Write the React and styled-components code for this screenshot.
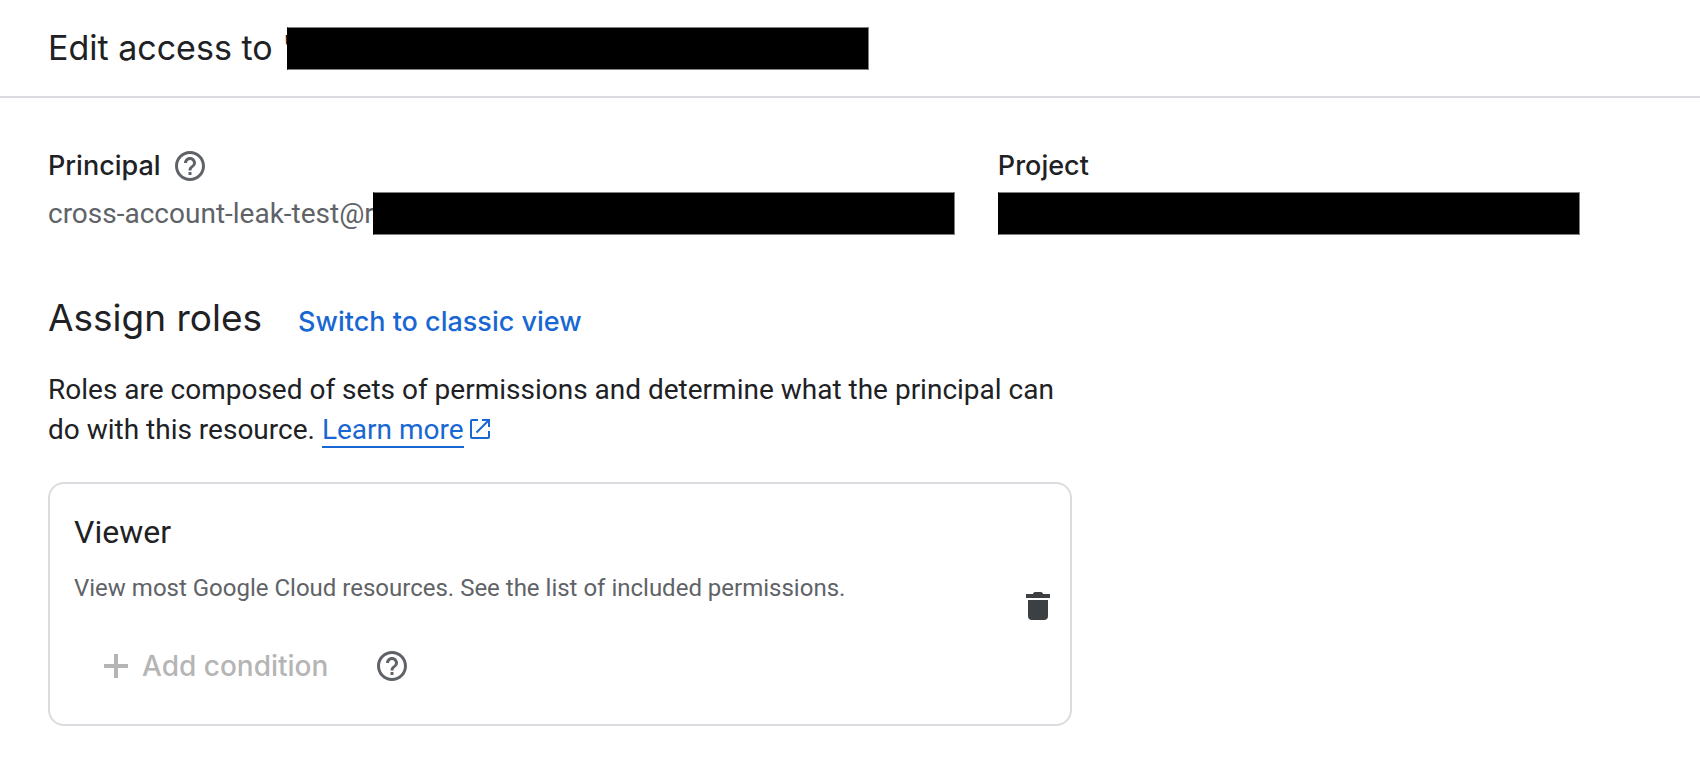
import React from 'react';
import styled, { createGlobalStyle } from 'styled-components';

const GlobalStyle = createGlobalStyle`
  * {
    box-sizing: border-box;
  }
  body {
    margin: 0;
    background: #fff;
    color: #202124;
    font-family: Roboto, sans-serif;
    font-size: 28px;
    line-height: 40px;
  }
`;

const HelpIcon = () => (
  <svg width="36" height="36" viewBox="0 0 24 24" fill="currentColor" aria-hidden="true">
    <path d="M11 18h2v-2h-2v2zm1-16C6.48 2 2 6.48 2 12s4.48 10 10 10 10-4.48 10-10S17.52 2 12 2zm0 18c-4.41 0-8-3.59-8-8s3.59-8 8-8 8 3.59 8 8-3.59 8-8 8zm0-14c-2.21 0-4 1.79-4 4h2c0-1.1.9-2 2-2s2 .9 2 2c0 2-3 1.75-3 5h2c0-2.25 3-2.5 3-5 0-2.21-1.79-4-4-4z" />
  </svg>
);

const PlusIcon = () => (
  <svg width="36" height="36" viewBox="0 0 36 36" fill="currentColor" aria-hidden="true">
    <path d="M16 6h4v10h10v4H20v10h-4V20H6v-4h10z" />
  </svg>
);

const TrashIcon = () => (
  <svg width="36" height="36" viewBox="0 0 36 36" fill="currentColor" aria-hidden="true">
    <path d="M8 14h20v16a4 4 0 0 1-4 4H12a4 4 0 0 1-4-4zM6 8h7c0-1 1-2 2-2h6c1 0 2 1 2 2h7v4H6z" />
  </svg>
);

const ExternalIcon = () => (
  <svg width="20" height="20" viewBox="0 0 20 20" fill="none" stroke="currentColor" strokeWidth="2" aria-hidden="true">
    <path d="M8 1H2a1 1 0 0 0-1 1v16a1 1 0 0 0 1 1h16a1 1 0 0 0 1-1v-6M12 1h7v7M19 1L6.500 13.500" />
  </svg>
);

const App = () => {
  return (
    <Panel>
      <GlobalStyle />
      <Header>
        <Title>Edit access to '</Title>
        <Redacted $overlap={5} />
      </Header>
      <Content>
        <Fields>
          <Field>
            <FieldLabel>
              Principal
              <IconButton type="button" aria-label="About principals">
                <HelpIcon />
              </IconButton>
            </FieldLabel>
            <FieldValue>
              cross-account-leak-test@r
              <Redacted $overlap={1} />
            </FieldValue>
          </Field>
          <Field>
            <FieldLabel>Project</FieldLabel>
            <FieldValue>
              v
              <Redacted $overlap={13} />
            </FieldValue>
          </Field>
        </Fields>
        <Roles>
          <RolesHeader>
            <RolesTitle>Assign roles</RolesTitle>
            <TextButton type="button">Switch to classic view</TextButton>
          </RolesHeader>
          <Description>
            Roles are composed of sets of permissions and determine what the principal can do with
            this resource.{' '}
            <LearnMore href="#learn-more">
              <span>Learn more</span>
              <ExternalIcon />
            </LearnMore>
          </Description>
          <Card>
            <CardInfo>
              <RoleName>Viewer</RoleName>
              <RoleText>View most Google Cloud resources. See the list of included permissions.</RoleText>
              <CardActions>
                <AddButton type="button" disabled>
                  <PlusIcon />
                  Add condition
                </AddButton>
                <IconButton type="button" aria-label="About conditions">
                  <HelpIcon />
                </IconButton>
              </CardActions>
            </CardInfo>
            <IconButton type="button" aria-label="Delete role" $dark>
              <TrashIcon />
            </IconButton>
          </Card>
        </Roles>
      </Content>
    </Panel>
  );
};

export default App;

const Panel = styled.main`
  width: 100%;
`;

const Header = styled.header`
  display: flex;
  align-items: center;
  padding: 0 48px;
  border-bottom: 2px solid #dadce0;
`;

const Title = styled.h1`
  margin: 0;
  font-family: Inter, sans-serif;
  font-size: 34px;
  font-weight: 400;
  line-height: 96px;
  white-space: nowrap;
`;

const Redacted = styled.span`
  flex: none;
  position: relative;
  width: 582px;
  height: 43px;
  margin-left: ${(props) => (props.$overlap ? -props.$overlap : 0)}px;
  background: #000;
  border: 1px solid #808080;
  border-left-color: #000;
`;

const Content = styled.div`
  padding: 50px 48px 38px;
`;

const Fields = styled.div`
  display: flex;
  gap: 43px;
`;

const Field = styled.div`
  display: flex;
  flex-direction: column;
  gap: 8px;
`;

const FieldLabel = styled.div`
  display: flex;
  align-items: center;
  gap: 11px;
  height: 36px;
  font-family: Inter, sans-serif;
  font-size: 27px;
  font-weight: 500;
`;

const FieldValue = styled.div`
  display: flex;
  align-items: center;
  color: #5f6368;
  white-space: nowrap;
`;

const IconButton = styled.button`
  display: flex;
  padding: 0;
  border: 0;
  background: none;
  color: ${(props) => (props.$dark ? '#3c4043' : '#5f6368')};
  cursor: pointer;
`;

const Roles = styled.section`
  max-width: 1024px;
  margin-top: 58px;
`;

const RolesHeader = styled.div`
  display: flex;
  align-items: baseline;
  gap: 36px;
`;

const RolesTitle = styled.h2`
  margin: 0;
  font-family: Inter, sans-serif;
  font-size: 37px;
  font-weight: 400;
  line-height: 50px;
`;

const TextButton = styled.button`
  padding: 0;
  border: 0;
  background: none;
  color: #1967d2;
  font-family: Inter, sans-serif;
  font-size: 27px;
  font-weight: 500;
  line-height: 36px;
  cursor: pointer;
`;

const Description = styled.p`
  margin: 27px 0 32px;
`;

const LearnMore = styled.a`
  color: #1967d2;
  text-decoration: none;
  white-space: nowrap;

  span {
    border-bottom: 2px solid #1967d2;
  }
  svg {
    margin-left: 6px;
  }
`;

const Card = styled.article`
  display: flex;
  align-items: center;
  justify-content: space-between;
  padding: 0 14px 0 24px;
  border: 2px solid #dadce0;
  border-radius: 16px;
`;

const CardInfo = styled.div`
  padding: 28px 0 40px;
`;

const RoleName = styled.h3`
  margin: 0;
  font-size: 32px;
  font-weight: 400;
  line-height: 40px;
`;

const RoleText = styled.p`
  margin: 20px 0 44px;
  color: #5f6368;
  font-size: 24px;
  line-height: 32px;
`;

const CardActions = styled.div`
  display: flex;
  align-items: center;
  gap: 22px;
`;

const AddButton = styled(TextButton)`
  display: flex;
  align-items: center;
  gap: 8px;
  padding: 0 24px;
  color: #b5b5b5;
  font-size: 28px;
  cursor: default;
`;
